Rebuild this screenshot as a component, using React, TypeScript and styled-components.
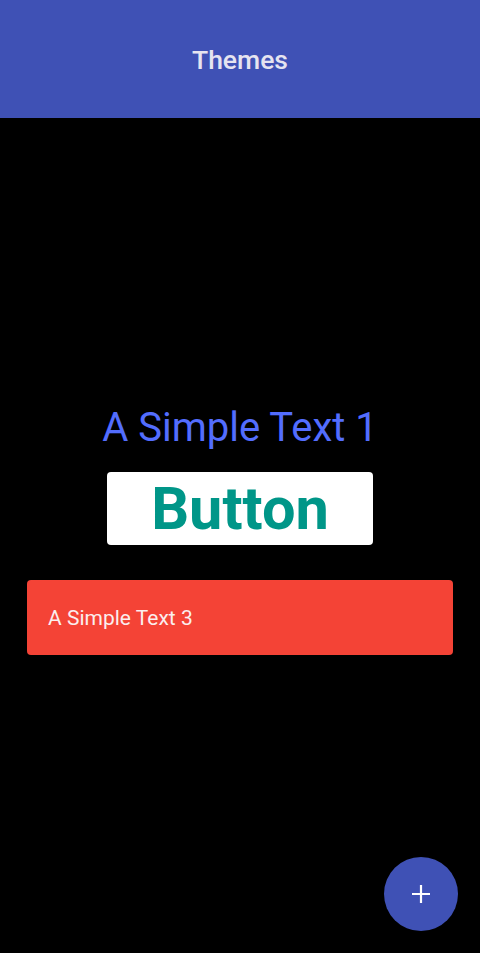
import React from "react";
import styled, { createGlobalStyle } from "styled-components";

const Global = createGlobalStyle`
  html, body { margin: 0; padding: 0; background: #000; }
  body { font-family: Roboto, "Noto Sans", sans-serif; }
  #root { min-height: 100vh; }
`;

const Page = styled.div`
  display: flex;
  flex-direction: column;
  min-height: 100vh;
  background: #000;
`;

const Header = styled.header`
  height: 118px;
  flex-shrink: 0;
  background: #3f51b5;
  display: flex;
  align-items: center;
  justify-content: center;
`;

const Title = styled.h1`
  margin: 0;
  font-size: 26.5px;
  font-weight: 500;
  color: #e6e4f0;
`;

const Main = styled.main`
  flex: 1;
  display: flex;
  flex-direction: column;
  align-items: center;
  justify-content: center;
  padding: 0 27px 12px;
`;

const BigText = styled.div`
  font-size: 40px;
  line-height: 47px;
  color: #536dfe;
`;

const WhiteButton = styled.button`
  margin-top: 21px;
  width: 266px;
  height: 73px;
  border: none;
  border-radius: 4px;
  background: #fff;
  color: #009688;
  font-family: Roboto, sans-serif;
  font-weight: 700;
  font-size: 59.5px;
  display: flex;
  align-items: center;
  justify-content: center;
  padding: 0;
`;

const RedBox = styled.div`
  margin-top: 35px;
  align-self: stretch;
  height: 75px;
  border-radius: 4px;
  background: #f44336;
  color: #fbeeee;
  font-size: 21px;
  display: flex;
  align-items: center;
  padding-left: 21px;
`;

const Fab = styled.button`
  position: fixed;
  right: 22px;
  bottom: 22px;
  width: 74px;
  height: 74px;
  border-radius: 50%;
  border: none;
  background: #3f51b5;
  display: flex;
  align-items: center;
  justify-content: center;
  padding: 0;
`;

export default function App() {
  return (
    <>
      <Global />
      <Page>
        <Header>
          <Title>Themes</Title>
        </Header>
        <Main>
          <BigText>A Simple Text 1</BigText>
          <WhiteButton>Button</WhiteButton>
          <RedBox>A Simple Text 3</RedBox>
        </Main>
        <Fab aria-label="add">
          <svg width="20" height="20" viewBox="0 0 20 20">
            <path d="M10 1v18M1 10h18" stroke="#fff" strokeWidth="2.2" fill="none" />
          </svg>
        </Fab>
      </Page>
    </>
  );
}
